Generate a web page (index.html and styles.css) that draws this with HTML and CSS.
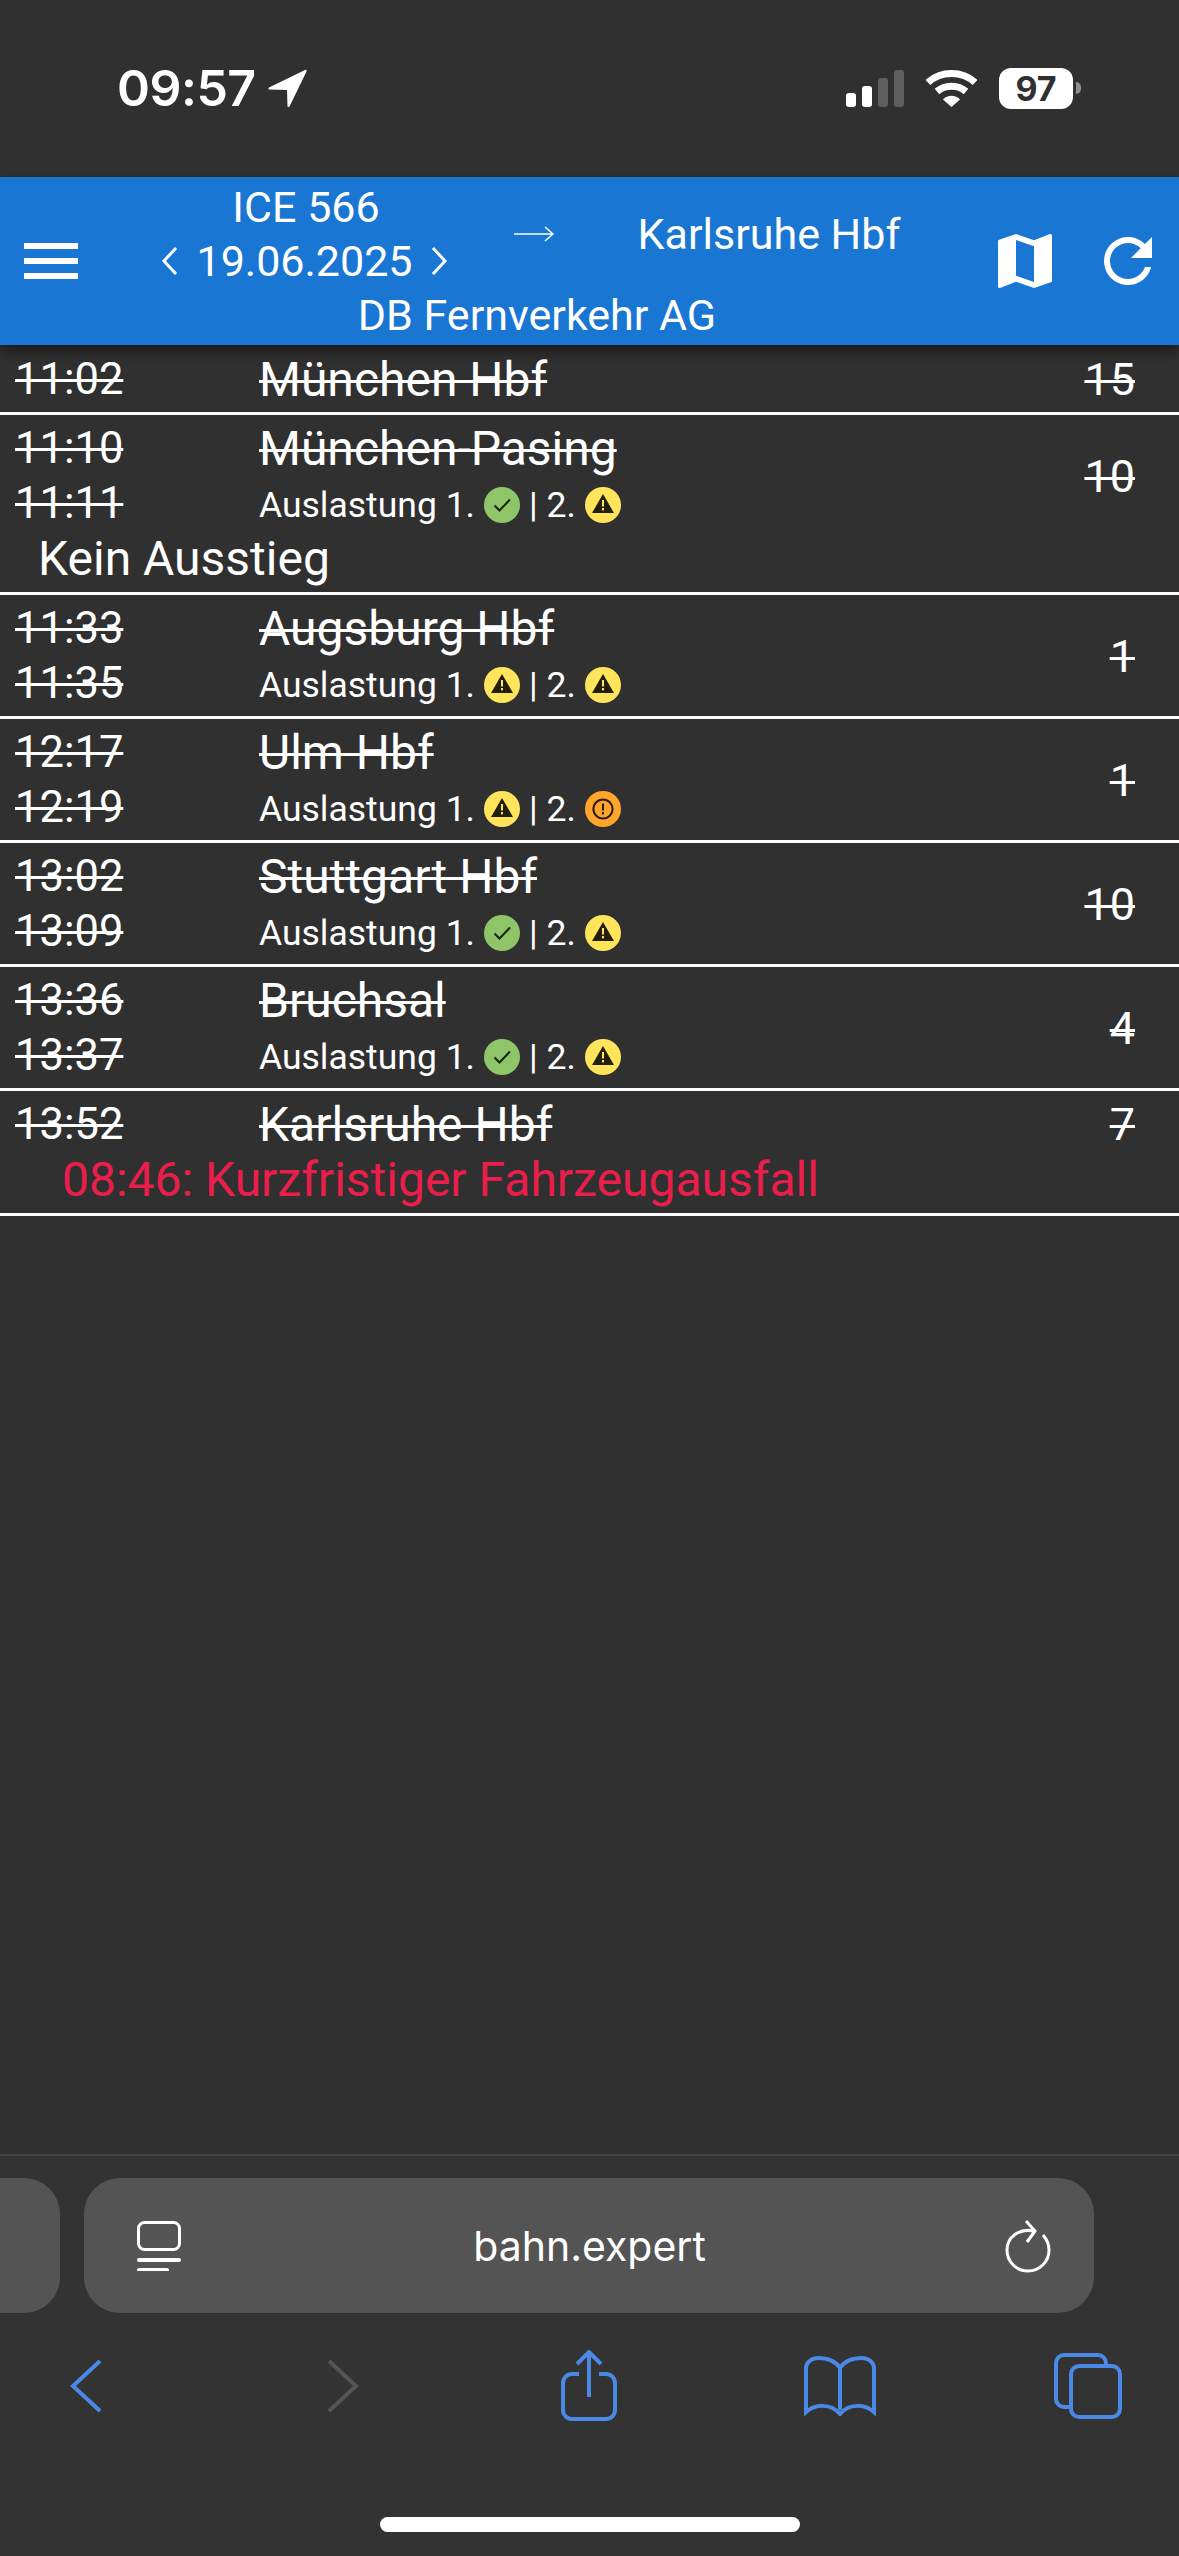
FILE: index.html
```html
<!DOCTYPE html>
<html lang="de">
<head>
    <meta charset="UTF-8">
    <meta name="viewport" content="width=device-width, initial-scale=1.0">
    <title>ICE 566 - bahn.expert</title>
    <link rel="stylesheet" href="styles.css">
</head>
<body>
    <!-- Shared occupancy icons -->
    <svg class="sprite" aria-hidden="true">
        <symbol id="load-low" viewBox="0 0 36 36">
            <circle cx="18" cy="18" r="18" fill="#8fc568"/>
            <path d="M10.5 18.5l5 5L26 12.5" fill="none" stroke="#16260e" stroke-width="2"/>
        </symbol>
        <symbol id="load-mid" viewBox="0 0 36 36">
            <circle cx="18" cy="18" r="18" fill="#ffe45c"/>
            <path d="M18 7L29 26H7z" fill="#221f0c"/>
            <rect x="17" y="13" width="2" height="6.5" fill="#ffe45c"/>
            <rect x="17" y="21" width="2" height="2.4" fill="#ffe45c"/>
        </symbol>
        <symbol id="load-high" viewBox="0 0 36 36">
            <circle cx="18" cy="18" r="18" fill="#ffa52b"/>
            <circle cx="18" cy="18" r="9.6" fill="none" stroke="#2a1a05" stroke-width="2"/>
            <rect x="17" y="12.5" width="2" height="7" fill="#2a1a05"/>
            <rect x="17" y="21" width="2" height="2.4" fill="#2a1a05"/>
        </symbol>
    </svg>

    <div class="status-bar">
        <div class="status-left">
            <span class="clock">09:57</span>
            <svg class="location" viewBox="0 0 39 38"><path d="M37 1L1 18.5c-1 .6-.6 2 .5 2L19 21l.5 16c0 1.200 1.500 1.500 2 .5L38.500 2.500C39 1.300 38.200.5 37 1z" fill="#fff"/></svg>
        </div>
        <div class="status-right">
            <div class="signal">
                <span class="bar bar-1"></span>
                <span class="bar bar-2"></span>
                <span class="bar bar-3"></span>
                <span class="bar bar-4"></span>
            </div>
            <svg class="wifi" viewBox="0 0 51 37">
                <path d="M2 12.500C14.500.5 36.500.5 49 12.500" fill="none" stroke="#fff" stroke-width="7"/>
                <path d="M11 21.500c8-7 21-7 29 0" fill="none" stroke="#fff" stroke-width="7"/>
                <path d="M17 29.500c4.500-5 12.500-5 17 0L25.500 37z" fill="#fff"/>
            </svg>
            <div class="battery">
                <span class="battery-level">97</span>
                <span class="battery-nub"></span>
            </div>
        </div>
    </div>

    <header class="app-bar">
        <button class="icon-btn menu-btn" aria-label="Menü">
            <svg viewBox="0 0 24 24"><path d="M3 18h18v-2H3v2zm0-5h18v-2H3v2zm0-7v2h18V6H3z"/></svg>
        </button>
        <div class="title">
            <div class="train">
                <div>ICE 566</div>
                <div class="date">
                    <svg class="chev" viewBox="0 0 18 30"><path d="M15 2L3 15l12 13"/></svg>
                    <span>19.06.2025</span>
                    <svg class="chev" viewBox="0 0 18 30"><path d="M3 2l12 13L3 28"/></svg>
                </div>
            </div>
            <svg class="arrow" viewBox="0 0 40 16"><path d="M0 8h39M31 1l8 7-8 7"/></svg>
            <div class="destination">Karlsruhe Hbf</div>
            <div class="operator">DB Fernverkehr AG</div>
        </div>
        <div class="actions">
            <button class="icon-btn" aria-label="Karte">
                <svg viewBox="0 0 24 24"><path d="M20.5 3l-.16.03L15 5.100 9 3 3.360 4.900c-.21.07-.36.25-.36.48V20.500c0 .28.22.5.5.5l.16-.03L9 18.900l6 2.100 5.640-1.900c.21-.07.36-.25.36-.48V3.500c0-.28-.22-.5-.5-.5zM15 19l-6-2.110V5l6 2.110V19z"/></svg>
            </button>
            <button class="icon-btn" aria-label="Aktualisieren">
                <svg viewBox="0 0 24 24"><path d="M17.650 6.350C16.200 4.900 14.210 4 12 4c-4.420 0-7.990 3.580-7.990 8s3.570 8 7.990 8c3.730 0 6.840-2.550 7.730-6h-2.080c-.82 2.330-3.040 4-5.650 4-3.310 0-6-2.690-6-6s2.690-6 6-6c1.660 0 3.140.69 4.220 1.780L13 11h7V4l-2.350 2.350z"/></svg>
            </button>
        </div>
    </header>

    <main class="stops">
        <div class="stop">
            <div class="times"><s>11:02</s></div>
            <div class="info"><s>München Hbf</s></div>
            <div class="platform top"><s>15</s></div>
        </div>
        <div class="stop">
            <div class="times"><s>11:10</s><s>11:11</s></div>
            <div class="info">
                <s>München-Pasing</s>
                <div class="load">Auslastung 1. <svg class="dot"><use href="#load-low"/></svg> | 2. <svg class="dot"><use href="#load-mid"/></svg></div>
            </div>
            <div class="platform"><s>10</s></div>
            <div class="note">Kein Ausstieg</div>
        </div>
        <div class="stop">
            <div class="times"><s>11:33</s><s>11:35</s></div>
            <div class="info">
                <s>Augsburg Hbf</s>
                <div class="load">Auslastung 1. <svg class="dot"><use href="#load-mid"/></svg> | 2. <svg class="dot"><use href="#load-mid"/></svg></div>
            </div>
            <div class="platform"><s>1</s></div>
        </div>
        <div class="stop">
            <div class="times"><s>12:17</s><s>12:19</s></div>
            <div class="info">
                <s>Ulm Hbf</s>
                <div class="load">Auslastung 1. <svg class="dot"><use href="#load-mid"/></svg> | 2. <svg class="dot"><use href="#load-high"/></svg></div>
            </div>
            <div class="platform"><s>1</s></div>
        </div>
        <div class="stop">
            <div class="times"><s>13:02</s><s>13:09</s></div>
            <div class="info">
                <s>Stuttgart Hbf</s>
                <div class="load">Auslastung 1. <svg class="dot"><use href="#load-low"/></svg> | 2. <svg class="dot"><use href="#load-mid"/></svg></div>
            </div>
            <div class="platform"><s>10</s></div>
        </div>
        <div class="stop">
            <div class="times"><s>13:36</s><s>13:37</s></div>
            <div class="info">
                <s>Bruchsal</s>
                <div class="load">Auslastung 1. <svg class="dot"><use href="#load-low"/></svg> | 2. <svg class="dot"><use href="#load-mid"/></svg></div>
            </div>
            <div class="platform"><s>4</s></div>
        </div>
        <div class="stop">
            <div class="times"><s>13:52</s></div>
            <div class="info"><s>Karlsruhe Hbf</s></div>
            <div class="platform top"><s>7</s></div>
            <div class="note cancelled">08:46: Kurzfristiger Fahrzeugausfall</div>
        </div>
    </main>

    <footer class="browser-bar">
        <div class="url-row">
            <div class="tab-stub"></div>
            <div class="url-pill">
                <svg class="page-icon" viewBox="0 0 44 50">
                    <rect x="1.500" y="1.500" width="41" height="27" rx="6"/>
                    <path d="M2 39h40M2 49h28" stroke-width="4" stroke-linecap="round"/>
                </svg>
                <span class="url">bahn.expert</span>
                <svg class="reload" viewBox="0 0 46 54">
                    <path d="M29 12C14 9 2 18 2 31c0 11.500 9 21 21 21s21-9.500 21-21c0-6-2.500-11-6-15"/>
                    <path d="M21 2l9 10-8 11"/>
                </svg>
            </div>
        </div>
        <nav class="toolbar">
            <svg class="tool back" viewBox="0 0 32 54"><path d="M30 2L3 27l27 25"/></svg>
            <svg class="tool forward" viewBox="0 0 32 54"><path d="M2 2l27 25L2 52"/></svg>
            <svg class="tool share" viewBox="0 0 58 72">
                <path d="M19 24H12a9 9 0 0 0-9 9v27a9 9 0 0 0 9 9h34a9 9 0 0 0 9-9V33a9 9 0 0 0-9-9H39"/>
                <path d="M29 47V3M17 14L29 2l12 12"/>
            </svg>
            <svg class="tool book" viewBox="0 0 72 60">
                <path d="M36 12C31 4 22 2 14 2 7 2 2 7 2 12v44c9-8 25-9 34 2 9-11 25-10 34-2V12c0-5-5-10-12-10-8 0-17 2-22 10zM36 12v42"/>
            </svg>
            <svg class="tool tabs" viewBox="0 0 68 66">
                <path d="M52 11V10a8 8 0 0 0-8-8H10a8 8 0 0 0-8 8v36a8 8 0 0 0 8 8h5"/>
                <rect x="17" y="13" width="49" height="51" rx="8"/>
            </svg>
        </nav>
        <div class="home-row"><span class="home-indicator"></span></div>
    </footer>
</body>
</html>
```

FILE: styles.css
```css
/* General Styles */
* {
    box-sizing: border-box;
}

body {
    margin: 0;
    width: 1179px;
    height: 2556px;
    overflow: hidden;
    display: flex;
    flex-direction: column;
    background: #303030;
    color: #fff;
    font-family: Roboto, 'Noto Sans', sans-serif;
}

.sprite {
    width: 0;
    height: 0;
    display: block;
}

/* Status bar */
.status-bar {
    height: 177px;
    flex: none;
    display: flex;
    justify-content: space-between;
    align-items: flex-start;
    padding: 60px 98px 0 117px;
}

.status-left {
    display: flex;
    align-items: center;
    gap: 12px;
}

.clock {
    font-family: Inter, sans-serif;
    font-weight: 600;
    font-size: 50px;
    line-height: 56px;
    letter-spacing: -0.5px;
}

.location {
    width: 39px;
    height: 38px;
}

.status-right {
    display: flex;
    align-items: center;
    gap: 22px;
    height: 56px;
}

.signal {
    display: flex;
    align-items: flex-end;
    gap: 6px;
    height: 37px;
}

.bar {
    width: 10px;
    border-radius: 3px;
    background: #fff;
}

.bar-1 { height: 14px; }
.bar-2 { height: 21px; }
.bar-3 { height: 29px; background: #5e5e5e; }
.bar-4 { height: 37px; background: #5e5e5e; }

.wifi {
    width: 51px;
    height: 37px;
}

.battery {
    display: flex;
    align-items: center;
    gap: 3px;
}

.battery-level {
    width: 74px;
    height: 41px;
    border-radius: 12px;
    background: #fff;
    color: #303030;
    font-family: Inter, sans-serif;
    font-weight: 700;
    font-size: 34px;
    line-height: 41px;
    text-align: center;
}

.battery-nub {
    width: 5px;
    height: 12px;
    border-radius: 0 6px 6px 0;
    background: #8e8e8e;
}

/* App bar */
.app-bar {
    height: 168px;
    flex: none;
    position: relative;
    display: flex;
    align-items: center;
    padding: 0 15px;
    background: #1976d2;
    box-shadow: 0 6px 12px rgba(0, 0, 0, 0.45);
    font-size: 43px;
}

.icon-btn {
    width: 72px;
    height: 72px;
    padding: 0;
    border: none;
    background: none;
}

.icon-btn svg {
    display: block;
    width: 72px;
    height: 72px;
    fill: #fff;
}

.menu-btn {
    margin-right: 15px;
}

.title {
    width: 880px;
    display: grid;
    grid-template-columns: 408px 48px 422px;
    align-items: center;
    text-align: center;
    line-height: 54px;
}

.date {
    display: flex;
    justify-content: center;
    align-items: center;
    gap: 17px;
    padding-right: 3px;
}

.chev {
    width: 18px;
    height: 30px;
    fill: none;
    stroke: #fff;
    stroke-width: 3;
}

.arrow {
    width: 40px;
    height: 16px;
    justify-self: center;
    fill: none;
    stroke: #fff;
    stroke-width: 1.5;
}

.operator {
    grid-column: 1 / -1;
    padding-right: 8px;
}

.actions {
    margin-left: auto;
    display: flex;
    gap: 31px;
}

/* Stops */
.stops {
    flex: 1;
    font-size: 43.5px;
}

.stop {
    display: grid;
    grid-template-columns: 244px 1fr auto;
    padding: 6px 44px 5px 15px;
    border-bottom: 3px solid #fff;
    line-height: 55px;
}

.stop:first-child {
    padding-top: 7px;
}

.stop s {
    text-decoration-thickness: 3px;
    display: block;
}

.times {
    display: flex;
    flex-direction: column;
}

.info {
    min-width: 0;
}

.info s {
    display: inline-block;
    font-size: 48px;
    vertical-align: top;
}

.load {
    display: flex;
    align-items: center;
    gap: 9px;
    height: 55px;
    font-size: 35.5px;
    padding-top: 3px;
}

.dot {
    width: 36px;
    height: 36px;
    flex: none;
}

.platform {
    align-self: center;
    font-size: 45px;
}

.platform.top {
    align-self: start;
}

.note {
    grid-column: 1 / -1;
    padding-left: 23px;
    line-height: 56px;
    font-size: 48px;
}

.note.cancelled {
    padding-left: 47px;
    color: #e91e4a;
}

/* Safari bar */
.browser-bar {
    height: 402px;
    flex: none;
    background: #333;
    border-top: 2px solid #454545;
}

.url-row {
    display: flex;
    gap: 24px;
    margin-top: 22px;
    height: 135px;
}

.tab-stub {
    width: 60px;
    border-radius: 0 36px 36px 0;
    background: #545454;
}

.url-pill {
    width: 1010px;
    display: flex;
    align-items: center;
    justify-content: space-between;
    padding: 0 43px 0 53px;
    border-radius: 36px;
    background: #545454;
}

.page-icon {
    width: 44px;
    height: 50px;
    fill: none;
    stroke: #fff;
    stroke-width: 3;
}

.url {
    font-family: Inter, sans-serif;
    font-size: 41px;
    margin-left: -7px;
}

.reload {
    width: 46px;
    height: 54px;
    fill: none;
    stroke: #fff;
    stroke-width: 3;
}

.toolbar {
    display: grid;
    grid-template-columns: repeat(5, 250.500px);
    justify-items: center;
    align-items: center;
    height: 72px;
    margin: 37px 0 0 -39px;
}

.tool {
    fill: none;
    stroke: #4a8ae6;
    stroke-width: 4;
}

.back,
.forward {
    width: 32px;
    height: 54px;
}

.forward {
    margin-left: 12px;
    stroke: #555;
}

.share {
    width: 58px;
    height: 72px;
    margin-left: 4px;
}

.book {
    width: 72px;
    height: 60px;
    margin-left: 4px;
}

.tabs {
    width: 68px;
    height: 66px;
}

.home-row {
    display: flex;
    justify-content: center;
    margin-top: 95px;
}

.home-indicator {
    width: 420px;
    height: 15px;
    border-radius: 8px;
    background: #fff;
}
```
